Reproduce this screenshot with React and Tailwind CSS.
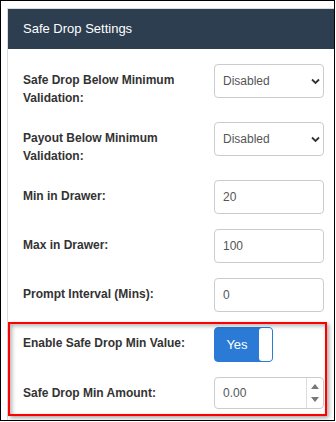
import { useState } from 'react';

const font = { fontFamily: '"Liberation Sans", Arial, sans-serif' };

function Row({ label, children, last }) {
  return (
    <div className={`flex items-start ${last ? '' : 'mb-[15px]'}`}>
      <label className="w-[191px] shrink-0 pt-[7px] pr-4 text-[12px] leading-[18px] font-bold text-[#333]">
        {label}
      </label>
      <div className="w-[110px] shrink-0">{children}</div>
    </div>
  );
}

function Select({ value }) {
  return (
    <div className="relative">
      <select
        defaultValue={value}
        className="w-full h-[34px] appearance-none rounded-[4px] border border-[#ccc] bg-white pl-[8px] pr-6 text-[12px] text-[#555] outline-none"
        style={font}
      >
        <option>Disabled</option>
        <option>Enabled</option>
      </select>
      <svg className="absolute right-[4px] top-[14px] pointer-events-none" width="9" height="7" viewBox="0 0 9 7">
        <path d="M1 1.5 L4.5 5 L8 1.5" fill="none" stroke="#333" strokeWidth="1.8" />
      </svg>
    </div>
  );
}

function TextInput({ value }) {
  return (
    <input
      defaultValue={value}
      className="w-full h-[34px] rounded-[4px] border border-[#ccc] bg-white px-[8px] text-[12px] text-[#555] outline-none"
      style={font}
    />
  );
}

export default function App() {
  const [on, setOn] = useState(true);

  return (
    <div className="w-[335px] h-[421px] border border-black bg-white overflow-hidden pl-[6px] pt-[7px]" style={font}>
      <div className="w-[340px] h-[420px] border border-[#ddd] bg-white">
        <div className="h-[40px] bg-[#2c3e50] flex items-center pl-[15px] text-white text-[13px]">
          Safe Drop Settings
        </div>

        <div className="pt-[15px] pl-[15px]">
          <Row label="Safe Drop Below Minimum Validation:">
            <Select value="Disabled" />
          </Row>
          <Row label="Payout Below Minimum Validation:">
            <Select value="Disabled" />
          </Row>
          <Row label="Min in Drawer:">
            <TextInput value="20" />
          </Row>
          <Row label="Max in Drawer:">
            <TextInput value="100" />
          </Row>
          <Row label="Prompt Interval (Mins):">
            <TextInput value="0" />
          </Row>

          <div className="relative w-[301px]">
            <Row label="Enable Safe Drop Min Value:">
              <button
                onClick={() => setOn(!on)}
                className="flex w-[59px] h-[35px] rounded-[4px] border border-[#2b7bd6] overflow-hidden bg-[#2b7bd6]"
              >
                <span className="flex-1 flex items-center justify-center text-white text-[13px]">
                  {on ? 'Yes' : 'No'}
                </span>
                <span className="w-[13px] h-full bg-white rounded-l-[3px]"></span>
              </button>
            </Row>
            <Row label="Safe Drop Min Amount:" last>
              <div className="flex w-full h-[32px] rounded-[4px] border border-[#ccc] bg-white overflow-hidden">
                <input
                  defaultValue="0.00"
                  className="flex-1 min-w-0 px-[8px] text-[12px] text-[#555] outline-none"
                  style={font}
                />
                <div className="w-[17px] border-l border-[#ddd] flex flex-col items-center justify-center gap-[8px]">
                  <svg width="8" height="5" viewBox="0 0 8 5"><path d="M0 5 L4 0 L8 5 Z" fill="#777" /></svg>
                  <svg width="8" height="5" viewBox="0 0 8 5"><path d="M0 0 L4 5 L8 0 Z" fill="#777" /></svg>
                </div>
              </div>
            </Row>

            <div className="absolute -top-[5px] -left-[15px] -right-[3px] -bottom-[7px] border-2 border-[#f00] pointer-events-none shadow-[2px_2px_4px_rgba(0,0,0,0.35),inset_2px_2px_4px_rgba(0,0,0,0.3)]"></div>
          </div>
        </div>
      </div>
    </div>
  );
}
